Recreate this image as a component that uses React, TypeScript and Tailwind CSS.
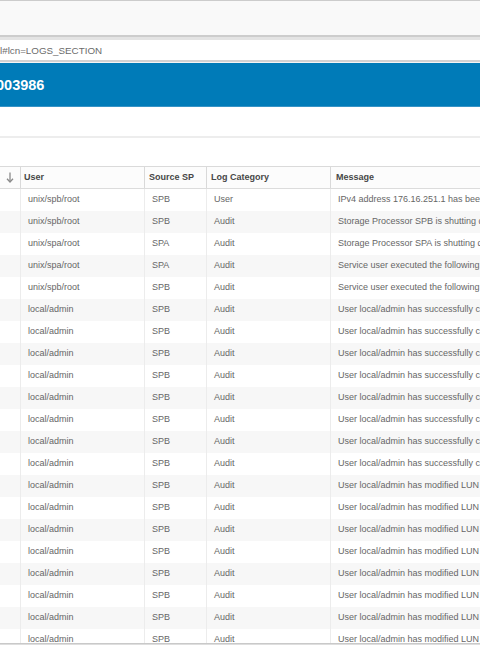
import React from "react";

type Row = { user: string; sp: string; cat: string; msg: string };

const rows: Row[] = [
  { user: "unix/spb/root", sp: "SPB", cat: "User", msg: "IPv4 address 176.16.251.1 has been added to the interface" },
  { user: "unix/spb/root", sp: "SPB", cat: "Audit", msg: "Storage Processor SPB is shutting down" },
  { user: "unix/spa/root", sp: "SPA", cat: "Audit", msg: "Storage Processor SPA is shutting down" },
  { user: "unix/spa/root", sp: "SPA", cat: "Audit", msg: "Service user executed the following command" },
  { user: "unix/spb/root", sp: "SPB", cat: "Audit", msg: "Service user executed the following command" },
  ...Array.from({ length: 8 }, () => ({
    user: "local/admin",
    sp: "SPB",
    cat: "Audit",
    msg: "User local/admin has successfully created",
  })),
  ...Array.from({ length: 8 }, () => ({
    user: "local/admin",
    sp: "SPB",
    cat: "Audit",
    msg: "User local/admin has modified LUN properties",
  })),
];

function SortArrow() {
  return (
    <svg width="8" height="11" viewBox="0 0 8 11" className="block">
      <path d="M4 0.5 V10" stroke="#8a8a8a" strokeWidth="1.3" fill="none" />
      <path d="M1 6.8 L4 10 L7 6.8" stroke="#8a8a8a" strokeWidth="1.3" fill="none" />
    </svg>
  );
}

export default function App() {
  return (
    <div
      className="w-[480px] h-[650px] overflow-hidden bg-white"
      style={{ fontFamily: '"Liberation Sans", Arial, sans-serif' }}
    >
      {/* browser chrome */}
      <div className="h-[35px] bg-[#f9f9f9] border-t border-[#cccccc]" />
      <div className="h-[2px] bg-[#cdcdcd]" />
      <div className="h-[3px] bg-[#e4e4e4]" />
      <div className="h-[20px] bg-white flex items-center pt-[2px]">
        <span className="text-[9.8px] text-[#6b6b6b] whitespace-nowrap">
          l#lcn=LOGS_SECTION
        </span>
      </div>
      <div className="h-[2px] bg-[#d2d2d2]" />
      <div className="h-[1px] bg-[#f4f4f4]" />

      {/* title bar */}
      <div className="h-[43px] bg-[#007bb8] flex items-center pt-[2px]">
        <span className="text-white font-bold text-[14.5px] -ml-[4px]">003986</span>
      </div>
      <div className="h-[1px] bg-[#3693c6]" />

      {/* toolbar area */}
      <div className="h-[29px] bg-white" />
      <div className="h-[2px] bg-[#ededed]" />
      <div className="h-[28px] bg-white" />

      {/* table */}
      <div className="h-[477px] overflow-hidden border-t border-[#dadada]">
        <div className="flex h-[22px] border-b border-[#dcdcdc] bg-[#fcfcfc] text-[9px] font-bold text-[#474747] whitespace-nowrap">
          <div className="w-[21px] shrink-0 border-r border-[#d9d9d9] flex items-center justify-end pr-[6px]">
            <SortArrow />
          </div>
          <div className="w-[124px] shrink-0 border-r border-[#d9d9d9] flex items-center pl-[3px]">User</div>
          <div className="w-[62px] shrink-0 border-r border-[#d9d9d9] flex items-center pl-[4px]">Source SP</div>
          <div className="w-[124px] shrink-0 border-r border-[#d9d9d9] flex items-center pl-[4px]">Log Category</div>
          <div className="w-[300px] shrink-0 flex items-center pl-[5px]">Message</div>
        </div>
        {rows.map((r, i) => (
          <div
            key={i}
            className={`flex h-[22px] text-[9px] text-[#666666] whitespace-nowrap ${
              i % 2 === 1 ? "bg-[#f7f7f7]" : "bg-white"
            }`}
          >
            <div className="w-[21px] shrink-0 border-r border-[#ececec]" />
            <div className="w-[124px] shrink-0 border-r border-[#ececec] flex items-center pl-[7px]">{r.user}</div>
            <div className="w-[62px] shrink-0 border-r border-[#ececec] flex items-center pl-[7px]">{r.sp}</div>
            <div className="w-[124px] shrink-0 border-r border-[#ececec] flex items-center pl-[7px]">{r.cat}</div>
            <div className="w-[300px] shrink-0 flex items-center pl-[7px] overflow-hidden">{r.msg}</div>
          </div>
        ))}
      </div>
      <div className="h-[1px] bg-[#c9c9c9]" />
      <div className="h-[1px] bg-[#dedede]" />
    </div>
  );
}
